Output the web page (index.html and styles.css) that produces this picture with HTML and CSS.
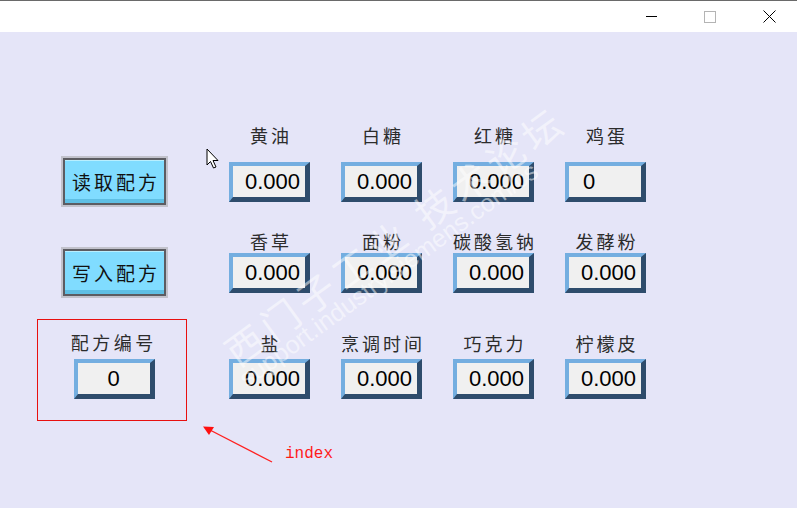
FILE: index.html
```html
<!DOCTYPE html>
<html lang="zh">
<head>
<meta charset="utf-8">
<title>配方</title>
<link rel="stylesheet" href="styles.css">
</head>
<body>
<div class="titlebar">
  <div class="controls">
    <svg class="ctl-min" width="11" height="12" viewBox="0 0 11 12"><line x1="0" y1="6.5" x2="11" y2="6.5" stroke="#000" stroke-width="1"/></svg>
    <svg class="ctl-max" width="12" height="12" viewBox="0 0 12 12"><rect x="0.5" y="0.5" width="11" height="11" fill="none" stroke="#b4b4b4" stroke-width="1"/></svg>
    <svg class="ctl-close" width="13" height="13" viewBox="0 0 13 13"><path d="M0.5 0.5 L12.5 12.5 M12.5 0.5 L0.5 12.5" stroke="#000" stroke-width="1" fill="none"/></svg>
  </div>
</div>
<div class="main">
  <div class="left">
    <div class="btn btn-read">读取配方</div>
    <div class="btn btn-write">写入配方</div>
    <div class="recipe-box">
      <div class="label">配方编号</div>
      <div class="field center">0</div>
    </div>
  </div>
  <div class="panel">
    <div class="row row1">
      <div class="cell"><div class="label">黄油</div><div class="field">0.000</div></div>
      <div class="cell"><div class="label">白糖</div><div class="field">0.000</div></div>
      <div class="cell"><div class="label">红糖</div><div class="field">0.000</div></div>
      <div class="cell"><div class="label">鸡蛋</div><div class="field left-al">0</div></div>
    </div>
    <div class="row row2">
      <div class="cell"><div class="label">香草</div><div class="field">0.000</div></div>
      <div class="cell"><div class="label">面粉</div><div class="field">0.000</div></div>
      <div class="cell"><div class="label">碳酸氢钠</div><div class="field">0.000</div></div>
      <div class="cell"><div class="label">发酵粉</div><div class="field">0.000</div></div>
    </div>
    <div class="row row3">
      <div class="cell"><div class="label">盐</div><div class="field">0.000</div></div>
      <div class="cell"><div class="label">烹调时间</div><div class="field">0.000</div></div>
      <div class="cell"><div class="label">巧克力</div><div class="field">0.000</div></div>
      <div class="cell"><div class="label">柠檬皮</div><div class="field">0.000</div></div>
    </div>
  </div>

  <div class="watermark wm-cn">西门子工业 技术论坛</div>
  <div class="watermark wm-url">support.industry.siemens.com/cs</div>

  <svg class="cursor" width="14" height="22" viewBox="0 0 14 22">
    <path d="M1 1 L1 17 L4.5 13.5 L7.5 20 L10 19 L7 12.5 L12 12.5 Z" fill="#fff" stroke="#000" stroke-width="1" stroke-linejoin="miter"/>
  </svg>

  <svg class="arrow" width="90" height="50" viewBox="0 0 90 50">
    <line x1="82" y1="45" x2="18" y2="12" stroke="#ff2020" stroke-width="1.3"/>
    <polygon points="13,9.5 24,10 19,18" fill="#ff1010"/>
  </svg>
  <span class="note">index</span>
</div>
</body>
</html>
```

FILE: styles.css
```css
html, body {
  margin: 0;
  padding: 0;
}
body {
  width: 797px;
  height: 508px;
  overflow: hidden;
  background: #e5e5f8;
  font-family: "Noto Sans CJK SC", "Noto Sans", sans-serif;
}
.titlebar {
  box-sizing: border-box;
  height: 32px;
  background: #ffffff;
  border-top: 1px solid #6a6a6a;
  display: flex;
  justify-content: flex-end;
  align-items: center;
}
.controls {
  display: flex;
  align-items: center;
  gap: 47px;
  padding-right: 21px;
}
.ctl-min { margin-top: -1px; }

.main {
  position: relative;
  height: 476px;
  background: #e5e5f8;
  display: flex;
  align-items: flex-start;
  padding-left: 37px;
  box-sizing: border-box;
}
.left {
  width: 150px;
  display: flex;
  flex-direction: column;
  align-items: flex-start;
  margin-top: 124px;
}
.btn {
  box-sizing: border-box;
  width: 107px;
  height: 51px;
  margin-left: 24px;
  border: 2px solid #c2c2cc;
  background: #80dcff;
  box-shadow:
    inset 0 0 0 2px #5c5c62,
    inset 0 3px 0 0 #b8efff,
    inset 0 -6px 0 0 #5fbfe4;
  display: flex;
  align-items: center;
  justify-content: center;
  font-size: 19px;
  line-height: 22px;
  letter-spacing: 3px;
  padding-left: 3px;
  color: #111;
}
.btn-write { margin-top: 40px; }

.recipe-box {
  box-sizing: border-box;
  width: 150px;
  height: 102px;
  margin-top: 21px;
  border: 1px solid #e81010;
  padding-top: 12px;
  padding-left: 4px;
  display: flex;
  flex-direction: column;
  align-items: center;
}
.recipe-box .label {
  letter-spacing: 3.5px;
  padding-left: 3.5px;
  margin-bottom: 7px;
  margin-left: -4px;
}

.panel {
  margin-left: 42px;
  margin-top: 93px;
  display: flex;
  flex-direction: column;
}
.row {
  display: flex;
  gap: 31px;
}
.row2 { margin-top: 29px; }
.row3 { margin-top: 40px; }
.cell {
  width: 81px;
  display: flex;
  flex-direction: column;
  align-items: center;
}
.label {
  height: 20px;
  font-size: 18px;
  line-height: 20px;
  letter-spacing: 3px;
  padding-left: 3px;
  white-space: nowrap;
  color: #2c2c2c;
}
.row1 .label { margin-bottom: 17px; }
.row2 .label { margin-bottom: 2px; }
.row3 .label { margin-bottom: 6px; }

.field {
  box-sizing: border-box;
  width: 81px;
  height: 40px;
  border-style: solid;
  border-width: 4px 5px 5px 4px;
  border-color: #74aee0 #2e4c6c #2e4c6c #74aee0;
  background: #f0f0f0;
  display: flex;
  align-items: center;
  justify-content: flex-end;
  padding-right: 5px;
  font-family: "Liberation Sans", Arial, sans-serif;
  font-size: 22px;
  color: #000;
  line-height: 1;
}
.field.left-al {
  justify-content: flex-start;
  padding-left: 14px;
}
.field.center {
  justify-content: center;
  padding-right: 0;
}

.watermark {
  position: absolute;
  white-space: nowrap;
  color: rgba(255, 255, 255, 0.5);
  transform: rotate(-36deg);
  transform-origin: 0 100%;
  pointer-events: none;
}
.wm-cn {
  left: 242px;
  top: 296px;
  font-size: 38px;
  line-height: 46px;
  letter-spacing: 6px;
}
.wm-url {
  left: 250px;
  top: 332px;
  font-family: "Liberation Sans", Arial, sans-serif;
  font-size: 25px;
  line-height: 28px;
}
.cursor {
  position: absolute;
  left: 206px;
  top: 116px;
}
.arrow {
  position: absolute;
  left: 190px;
  top: 385px;
}
.note {
  position: absolute;
  left: 285px;
  top: 412px;
  font-family: "Liberation Mono", "DejaVu Sans Mono", monospace;
  font-size: 16px;
  line-height: 20px;
  color: #ff1a1a;
}
```
